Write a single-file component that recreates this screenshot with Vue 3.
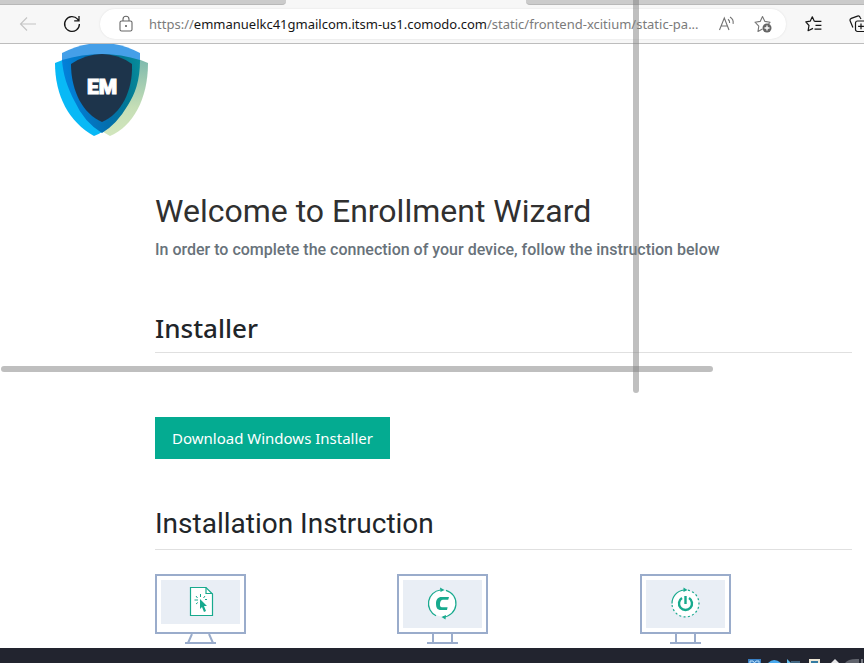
<script setup>
const url = {
  scheme: 'https://',
  host: 'emmanuelkc41gmailcom.itsm-us1.comodo.com',
  path: '/static/frontend-xcitium/static-pa...'
}
</script>

<template>
  <div class="screen">
    <header class="browser">
      <div class="tabs"><span class="tab-rest"></span><span class="tab-active"></span><span class="tab-rest right"></span></div>
      <div class="toolbar">
        <button class="tool back" aria-label="Back">
          <svg width="18" height="16" viewBox="0 0 18 16" fill="none" stroke="#c4c4c4" stroke-width="1.1"><path d="M17 8H1.5M8 1.5 1.5 8 8 14.5" /></svg>
        </button>
        <button class="tool reload" aria-label="Reload">
          <svg width="18" height="18" viewBox="0 0 18 18" fill="none" stroke="#161616" stroke-width="1.3"><path d="M16.4 9A7.4 7.4 0 1 1 14.6 4.2L16 5.6M16 1V5.8H11.2" /></svg>
        </button>
        <div class="address">
          <svg class="lock" width="14" height="18" viewBox="0 0 14 18" fill="none" stroke="#666" stroke-width="1.1"><rect x="1" y="6" width="12" height="10" rx="1.6" /><path d="M4 6V4.2a3 3 0 0 1 6 0V6" /><circle cx="7" cy="11" r="1" fill="#555" stroke="none" /></svg>
          <div class="url"><span>{{ url.scheme }}</span><span class="host">{{ url.host }}</span><span>{{ url.path }}</span></div>
          <button class="tool" aria-label="Read aloud">
            <svg width="18" height="18" viewBox="0 0 18 18" fill="none" stroke="#737373" stroke-width="1.1"><path d="M1.5 15 6.3 3 11 15M3.1 11H9.5M10 4.2C11.3 5.1 11.8 6.4 11.6 8M12 2C14.5 3.5 15.6 5.6 15.1 8.8" /></svg>
          </button>
          <button class="tool star" aria-label="Add to favorites">
            <svg width="18" height="18" viewBox="0 0 18 18" fill="none"><path d="M8.4 14 4 16.4l.8-5.3L1 7.2l5.2-.8L8.5 1.5l2.4 4.9 5.2.8-1.5 1.6" stroke="#777" stroke-width="1.1" stroke-linejoin="round" /><circle cx="13" cy="13" r="4.5" fill="#666" /><path d="M13 10.5v5M10.5 13h5" stroke="#fff" stroke-width="1.3" /></svg>
          </button>
        </div>
        <button class="tool favorites" aria-label="Favorites">
          <svg width="18" height="18" viewBox="0 0 18 18" fill="none" stroke="#161616" stroke-width="1.2" stroke-linejoin="round"><path d="M9.3 6.3 7.3 1.8 5.2 6.2.8 6.9 4 10.5l-.9 5.2L8 13.4M9.3 6.3H16.4M10.5 10.3H16.4M9.5 14.2H16.4" /></svg>
        </button>
        <button class="tool collections" aria-label="Collections">
          <svg width="18" height="18" viewBox="0 0 18 18" fill="none" stroke="#161616" stroke-width="1.2"><rect x="6.5" y="6" width="11" height="10.5" rx="2" /><path d="M12 8.4v5.8M9.1 11.3h5.8M3.9 12.6 1.2 6A2 2 0 0 1 2.3 3.4L8.5 1.1A2 2 0 0 1 11 2.3L12 4" /></svg>
        </button>
      </div>
    </header>

    <main class="page">
      <svg class="logo" width="94" height="93" viewBox="0 0 94 93" role="img" aria-label="EM shield">
        <defs>
          <linearGradient id="green" x1="0" y1="0" x2="0" y2="1"><stop offset="0" stop-color="#75b5ac" /><stop offset=".65" stop-color="#c5deb6" /><stop offset="1" stop-color="#d2e6bd" /></linearGradient>
          <linearGradient id="teal" gradientUnits="userSpaceOnUse" x1="8" y1="40" x2="86" y2="30"><stop offset="0" stop-color="#0382dd" /><stop offset=".5" stop-color="#036ead" /><stop offset=".8" stop-color="#027994" /><stop offset="1" stop-color="#078b9a" /></linearGradient>
        </defs>
        <path d="M0 19Q40 1 79 18C79 55 64 82 39 92C14 78 0 52 0 19Z" fill="#09b9f6" />
        <path d="M14 18Q54 1 93 19C93 55 78 82 55 92C29 78 14 52 14 18Z" fill="url(#green)" />
        <path d="M7 9Q47-11 85 9V20H7Z" fill="#459fe8" />
        <path d="M7 16Q27 10 47 10Q66 10 85 16C85 37 80 50 73 61Q62 80 47 89Q29 78 20 58C12 43 8 30 7 16Z" fill="url(#teal)" />
        <path d="M16 20Q31 10 47 10Q63 10 77 20C78 47 66 70 47 78C28 70 16 47 16 20Z" fill="#1d344b" />
        <text x="47" y="50" text-anchor="middle">EM</text>
      </svg>

      <section class="content">
        <h1>Welcome to Enrollment Wizard</h1>
        <p class="lead">In order to complete the connection of your device, follow the instruction below</p>
        <h2 class="installer">Installer</h2>
        <button class="download">Download Windows Installer</button>
        <h2 class="instruction">Installation Instruction</h2>
        <div class="steps">
          <svg class="monitor" viewBox="0 0 92 70" width="92" height="70" role="img" aria-label="Run the installer">
            <rect x="1" y="1" width="89" height="58" fill="#fff" stroke="#9aaccb" stroke-width="2" /><rect x="6" y="6" width="79" height="44" fill="#e9eef5" />
            <path d="M37 60 33 69M54 60 58 69M30 69H61" fill="none" stroke="#9aaccb" stroke-width="2" />
            <g fill="none" stroke="#18aa8e" stroke-width="1.2"><path d="M35.5 13.5H51L57.5 20V41.5H35.5Z" fill="#fff" /><path d="M51 13.5V19.5H57.5" /><path d="M45.5 20v3M41 22l1.5 2M50 22l-1.5 2M39.5 26H43M41 30l1.8-1.5M50 25.5H52" stroke-width="1" /></g>
            <path d="M45 25 52 32H49L51 37 49 38 47 33 45 35Z" fill="#18aa8e" />
          </svg>
          <svg class="monitor" viewBox="0 0 92 70" width="92" height="70" role="img" aria-label="Agent connects">
            <rect x="1" y="1" width="89" height="58" fill="#fff" stroke="#9aaccb" stroke-width="2" /><rect x="6" y="6" width="79" height="48" fill="#e9eef5" />
            <path d="M36 60V69M55 60V69M30 69H61" fill="none" stroke="#9aaccb" stroke-width="2" />
            <circle cx="45.5" cy="29.5" r="13" fill="#fff" />
            <path d="M39 41.7A13.6 13.6 0 0 1 43.5 16M49 16.3A13.6 13.6 0 0 1 46 43" fill="none" stroke="#18aa8e" stroke-width="1.2" />
            <path d="M43 13.5 47.5 16 43.5 18ZM49 41 44.5 43 48.5 45.5Z" fill="#18aa8e" />
            <path d="M52 23H44.5C41 23 39 25.5 39 29.5C39 34 40.5 36 44 36H50L50.6 33.2H45C43.3 33.2 42.7 32 43 29.8C43.3 27 44.2 25.8 46 25.8H51.2Z" fill="#18aa8e" />
          </svg>
          <svg class="monitor" viewBox="0 0 92 70" width="92" height="70" role="img" aria-label="Restart the device">
            <rect x="1" y="1" width="89" height="58" fill="#fff" stroke="#9aaccb" stroke-width="2" /><rect x="6" y="6" width="79" height="48" fill="#e9eef5" />
            <path d="M36 60V69M55 60V69M30 69H61" fill="none" stroke="#9aaccb" stroke-width="2" />
            <circle cx="45.5" cy="29.5" r="13" fill="#fff" />
            <g fill="none" stroke="#18aa8e"><path d="M32 29.5A13.5 13.5 0 0 1 44 16" stroke-width="1.2" /><path d="M48 16.2A13.5 13.5 0 1 1 32 30" stroke-width="1.2" stroke-dasharray="2 2.4" /><path d="M42 24A6.5 6.5 0 1 0 49 24M45.5 22V30" stroke-width="2.4" /></g>
            <path d="M43.5 13.5 47.5 16 43.5 18Z" fill="#18aa8e" />
          </svg>
        </div>
      </section>
    </main>

    <footer class="taskbar">
      <svg width="116" height="4" viewBox="0 0 116 4" fill="none">
        <rect width="13" height="4" fill="#387fc4" /><path d="M2 4V2H5L6.5 4 8 2H11V4" stroke="#b9e1fb" stroke-width="1" />
        <path d="M20 4Q26-2 33 4Z" fill="#48a9ee" />
        <path d="M39 0V4H43Z" fill="#62bfef" /><path d="M43 3H52" stroke="#426681" stroke-width="2" />
        <path d="M62 4V1H71V4" fill="#347ba2" stroke="#eee7d6" stroke-width="2" />
        <path d="M83 4 87 0 91 4Z" fill="#e7e7e9" />
        <path d="M97 4Q100 0 108 0H111V4Z" fill="#60636c" /><path d="M114 0V4" stroke="#777a82" stroke-width="2" />
      </svg>
    </footer>

    <div class="bar vertical"></div>
    <div class="bar horizontal"></div>
  </div>
</template>

<style>
body { margin: 0; }
</style>

<style scoped>
* { box-sizing: border-box; }
.screen { position: relative; display: flex; flex-direction: column; height: 100vh; overflow: hidden; background: #fff; font-family: "Noto Sans", sans-serif; }
.browser { flex: none; background: #f7f7f7; border-bottom: 1px solid #bdbdbd; }
.tabs { display: flex; height: 5px; }
.tab-rest { flex: 286; background: #cbcbcb; border-bottom: 1px solid #b8b8b8; border-radius: 0 0 4px 0; }
.tab-rest.right { flex: 338; border-radius: 0 0 0 4px; }
.tab-active { flex: 240; }
.toolbar { display: flex; align-items: center; height: 38px; padding-left: 19px; overflow: hidden; }
.tool { display: flex; flex: none; padding: 0; border: 0; background: none; }
.reload { margin-left: 26px; }
.address { display: flex; flex: 1; align-items: center; min-width: 0; height: 30px; margin-left: 19px; padding: 0 14px 0 19px; border-radius: 15px; background: #fff; box-shadow: 0 0 2px #ddd; }
.lock { flex: none; }
.url { flex: 1; min-width: 0; margin-left: 16px; overflow: hidden; color: #7b7b7b; font-family: "Noto Sans", sans-serif; font-size: 13px; line-height: 20px; white-space: nowrap; }
.host { color: #161616; }
.star { margin-left: 18px; }
.favorites { margin-left: 19px; }
.collections { margin: 0 -3px 0 26px; }
.page { flex: 1; min-height: 0; overflow: hidden; }
.logo { display: block; margin-left: 55px; }
.logo text { fill: #fff; stroke: #fff; stroke-width: 1px; font: 900 21px Roboto, sans-serif; }
.content { padding: 52px 12px 0 155px; color: #212529; }
h1, h2, p { margin: 0; }
h1 { color: #303030; font: 400 32px/44px Roboto, sans-serif; }
.lead { margin-top: 5px; color: #68727a; font: 500 16px/24px Roboto, sans-serif; }
h2 { border-bottom: 1px solid #e0e0e0; }
.installer { margin-top: 46px; padding-bottom: 4px; font: 500 26px/40px "Noto Sans", sans-serif; }
.download { display: block; height: 42px; margin-top: 64px; padding: 0 17px; border: 0; background: #04ab91; color: #fff; font: 400 15px/22px "Noto Sans", sans-serif; }
.instruction { margin-top: 45px; padding-bottom: 5px; font: 400 28px/40px Roboto, sans-serif; }
.steps { display: grid; grid-template-columns: repeat(3, 1fr); gap: 30px; margin-top: 24px; }
.monitor { display: block; }
.taskbar { display: flex; flex: none; align-items: flex-end; justify-content: flex-end; height: 15px; background: #22242f; }
.bar { position: absolute; background: rgba(128, 128, 128, .5); border-radius: 3px; }
.vertical { top: -4px; left: 633px; width: 6px; height: 397px; }
.horizontal { top: 366px; left: 1px; width: 712px; height: 6px; }
</style>
